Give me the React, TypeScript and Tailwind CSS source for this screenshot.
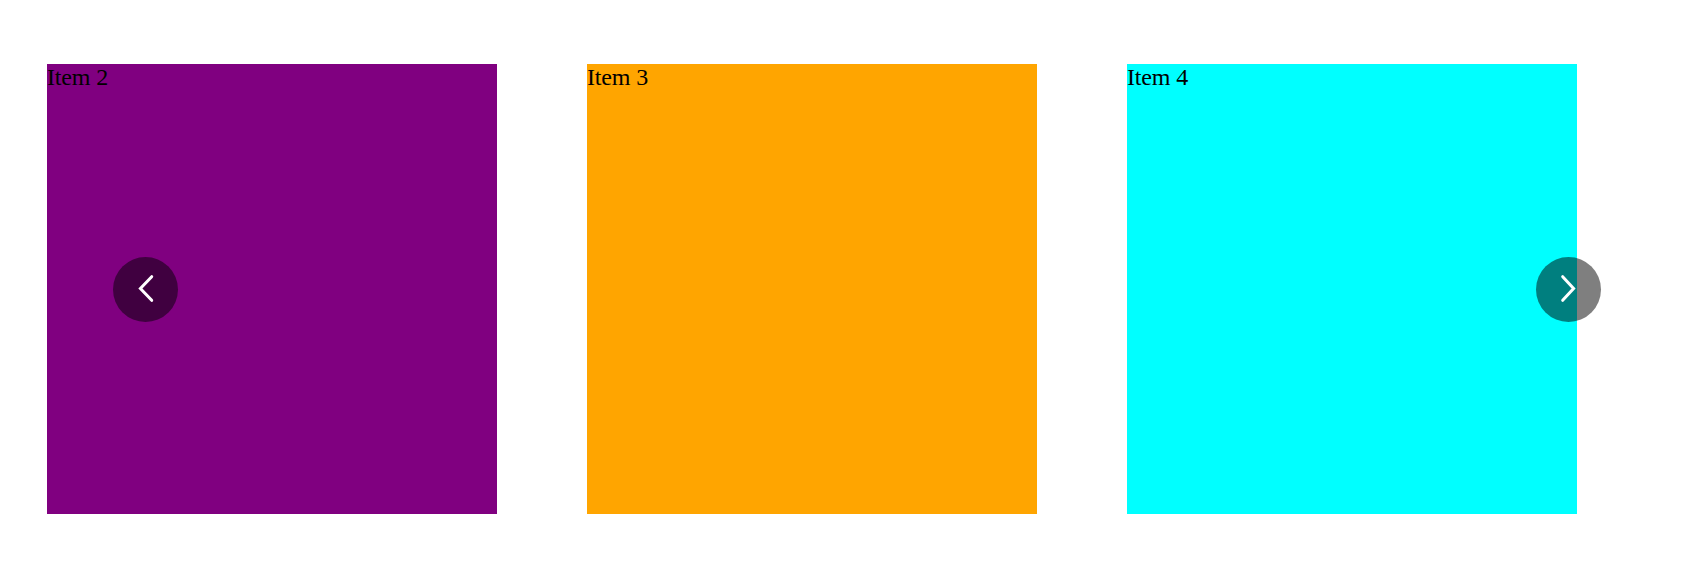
const items = [
  { label: "Item 2", color: "bg-[#800080]" },
  { label: "Item 3", color: "bg-[#ffa500]" },
  { label: "Item 4", color: "bg-[#00ffff]" },
];

function Chevron({ points }: { points: string }) {
  return (
    <svg width="65" height="65" viewBox="0 0 65 65" fill="none" stroke="#fff" strokeWidth="3" strokeLinecap="round" strokeLinejoin="miter">
      <polyline points={points} />
    </svg>
  );
}

export default function App() {
  return (
    <div className="relative h-[580px] w-full overflow-hidden bg-white font-['Liberation_Serif',serif] text-black">
      <div className="flex gap-[90px] pl-[47px] pt-[64px]">
        {items.map((item) => (
          <div key={item.label} className={`h-[450px] w-[450px] shrink-0 text-[24px] leading-[normal] tracking-[-0.15px] ${item.color}`}>
            {item.label}
          </div>
        ))}
      </div>
      <button aria-label="Previous" className="absolute left-[113px] top-[257px] flex h-[65px] w-[65px] rounded-full bg-black/50">
        <Chevron points="38.7,19.7 27.4,31.5 38.7,43.3" />
      </button>
      <button aria-label="Next" className="absolute left-[1536px] top-[257px] flex h-[65px] w-[65px] rounded-full bg-black/50">
        <Chevron points="26.7,19.7 37.6,31.5 26.7,43.3" />
      </button>
    </div>
  );
}
